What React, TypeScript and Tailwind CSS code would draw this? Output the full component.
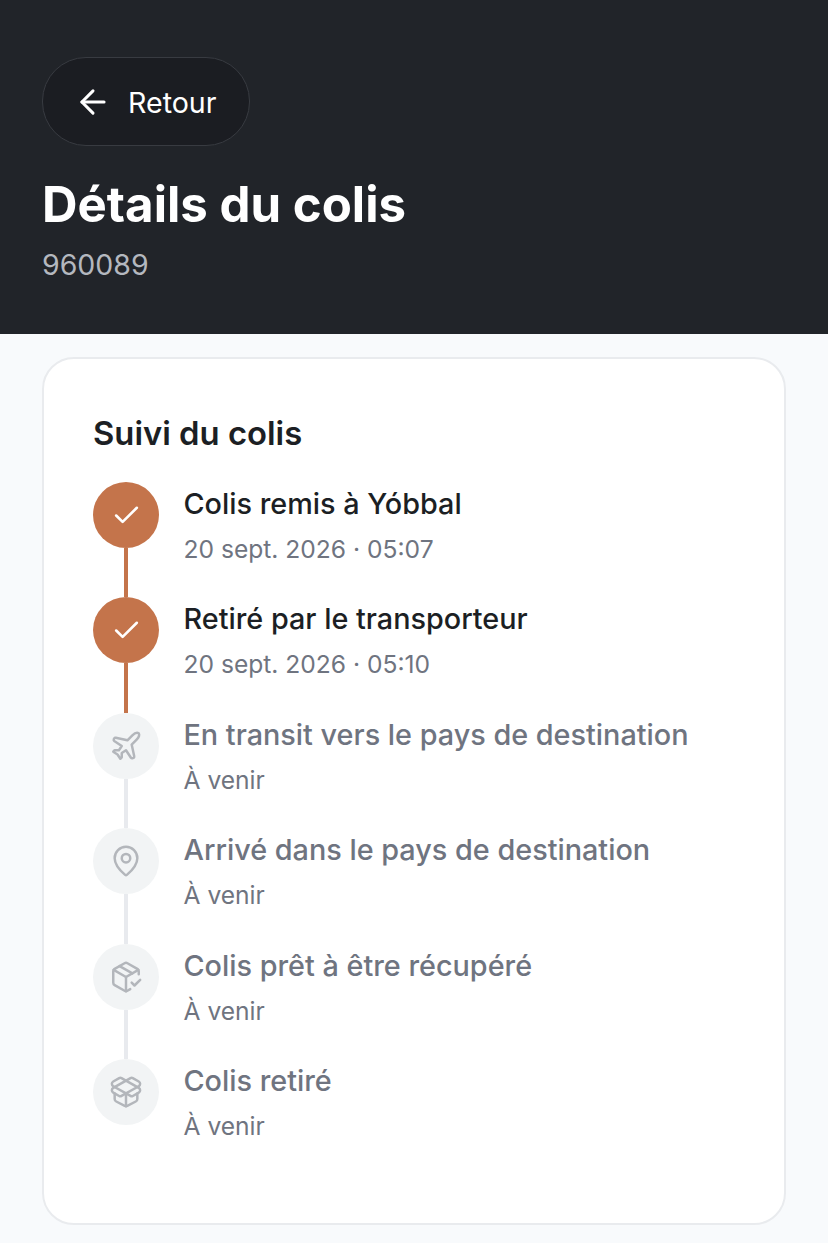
import { ArrowLeft, Check, MapPin, PackageCheck, PackageOpen, Plane, type LucideIcon } from 'lucide-react';

type Step = { title: string; sub: string; done: boolean; icon: LucideIcon };

const steps: Step[] = [
  { title: 'Colis remis à Yóbbal', sub: '20 sept. 2026 · 05:07', done: true, icon: Check },
  { title: 'Retiré par le transporteur', sub: '20 sept. 2026 · 05:10', done: true, icon: Check },
  { title: 'En transit vers le pays de destination', sub: 'À venir', done: false, icon: Plane },
  { title: 'Arrivé dans le pays de destination', sub: 'À venir', done: false, icon: MapPin },
  { title: 'Colis prêt à être récupéré', sub: 'À venir', done: false, icon: PackageCheck },
  { title: 'Colis retiré', sub: 'À venir', done: false, icon: PackageOpen },
];

export default function App() {
  return (
    <div className="h-[1243px] overflow-hidden bg-[#f8fafc] font-['Inter',sans-serif]">
      <header className="h-[334px] bg-[#212429] px-[42px] pt-[57px]">
        <button className="flex h-[89px] w-[208px] items-center gap-[16px] rounded-[44px] border border-[#383b41] bg-[#1b1d22] pl-[31px] text-[28.6px] text-white">
          <ArrowLeft size={38} strokeWidth={1.9} />
          <span className="pt-[3px]">Retour</span>
        </button>
        <h1 className="mt-[28px] text-[49.2px] leading-[60px] font-bold text-white">Détails du colis</h1>
        <p className="mt-[16px] text-[28.5px] leading-[30px] text-[#b4b8bf]">960089</p>
      </header>

      <main className="px-[42px] pt-[23px]">
        <section className="h-[868px] rounded-[32px] border-2 border-[#e9ebee] bg-white pt-[54px] pr-[50px] pl-[49px]">
          <h2 className="text-[32.8px] leading-[40px] font-semibold text-[#1c1f24]">Suivi du colis</h2>
          <ol className="mt-[29px]">
            {steps.map((step, i) => {
              const Icon = step.icon;
              const last = i === steps.length - 1;
              return (
                <li key={step.title} className="flex h-[115.4px] gap-[24.5px]">
                  <div className="flex w-[66px] shrink-0 flex-col items-center">
                    <div className={step.done ? 'flex h-[66px] w-[66px] shrink-0 items-center justify-center rounded-full bg-[#c4744b] text-white' : 'flex h-[66px] w-[66px] shrink-0 items-center justify-center rounded-full bg-[#f2f4f5] text-[#b3b6bb]'}>
                      <Icon size={step.done ? 31 : 34} strokeWidth={step.done ? 2 : 1.75} />
                    </div>
                    {!last && <div className={step.done ? 'w-[4px] flex-1 bg-[#c4744b]' : 'w-[4px] flex-1 bg-[#e8eaee]'} />}
                  </div>
                  <div className="pt-[2px]">
                    <p className={step.done ? 'text-[28.8px] leading-[40px] font-medium text-[#1c1f24]' : 'text-[28.8px] leading-[40px] font-medium text-[#6f7480]'}>{step.title}</p>
                    <p className="mt-[7px] text-[24.6px] leading-[36px] text-[#6f7480]">{step.sub}</p>
                  </div>
                </li>
              );
            })}
          </ol>
        </section>
      </main>
    </div>
  );
}
